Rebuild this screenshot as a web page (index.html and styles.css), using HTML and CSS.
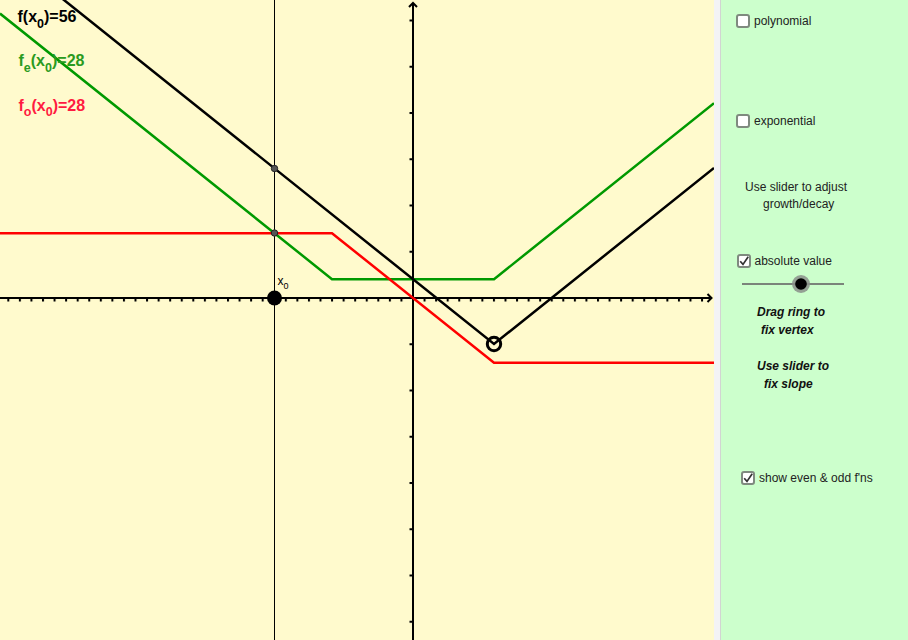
FILE: index.html
```html
<!DOCTYPE html>
<html>
<head>
<meta charset="utf-8">
<link rel="stylesheet" href="styles.css">
</head>
<body>
<div class="app">
  <div class="graphics">
    <svg width="714" height="640" viewBox="0 0 714 640">
      <defs>
        <pattern id="xt" patternUnits="userSpaceOnUse" x="412" y="0" width="11.5625" height="640">
          <rect x="0" y="298" width="2" height="3.5" fill="#000"/>
        </pattern>
        <pattern id="yt" patternUnits="userSpaceOnUse" x="0" y="297" width="714" height="46.25">
          <rect x="409.5" y="0" width="3" height="2" fill="#000"/>
        </pattern>
      </defs>
      <!-- axes -->
      <rect x="0" y="298" width="704" height="4" fill="url(#xt)"/>
      <rect x="405" y="10" width="8" height="630" fill="url(#yt)"/>
      <line x1="0" y1="298" x2="711" y2="298" stroke="#000" stroke-width="2"/>
      <polyline points="707.5,294 711.5,298 707.5,302" fill="none" stroke="#000" stroke-width="2"/>
      <line x1="413" y1="3" x2="413" y2="640" stroke="#000" stroke-width="2"/>
      <polyline points="409,7 413,3 417,7" fill="none" stroke="#000" stroke-width="2"/>
      <!-- vertical line through x0 -->
      <line x1="274.5" y1="0" x2="274.5" y2="640" stroke="#000" stroke-width="1"/>
      <!-- functions -->
      <polyline points="0,13.6 332,279.2 494,279.2 714,103.2" fill="none" stroke="#009900" stroke-width="2.5"/>
      <polyline points="0,233.2 332,233.2 494,362.8 714,362.8" fill="none" stroke="#ff0000" stroke-width="2.5"/>
      <polyline points="0,-51.2 494,344 714,168" fill="none" stroke="#000" stroke-width="2.5"/>
      <!-- points -->
      <circle cx="274.5" cy="168.5" r="3.2" fill="#555" stroke="#222" stroke-width="1"/>
      <circle cx="274.5" cy="233" r="3.2" fill="#555" stroke="#222" stroke-width="1"/>
      <circle cx="274.5" cy="298" r="7.5" fill="#000"/>
      <circle cx="494" cy="344" r="6.7" fill="none" stroke="#000" stroke-width="3"/>
      <!-- labels -->
      <text class="xlab" x="277.5" y="284.5">x<tspan class="xsub" dy="4">0</tspan></text>
      <text class="flab fblack" x="17.5" y="22">f(x<tspan class="sub" dy="6">0</tspan><tspan dy="-6">)=56</tspan></text>
      <text class="flab fgreen" x="18.5" y="66">f<tspan class="sub" dy="6">e</tspan><tspan dy="-6">(x</tspan><tspan class="sub" dy="6">0</tspan><tspan dy="-6">)=28</tspan></text>
      <text class="flab fred" x="18.5" y="111">f<tspan class="sub" dy="5">o</tspan><tspan dy="-5">(x</tspan><tspan class="sub" dy="5">0</tspan><tspan dy="-5">)=28</tspan></text>
    </svg>
  </div>
  <div class="divider"></div>
  <div class="panel">
    <div class="check-row row-poly"><span class="box"></span><span>polynomial</span></div>
    <div class="check-row row-exp"><span class="box"></span><span>exponential</span></div>
    <div class="info">
      <div class="l1">Use slider to adjust</div>
      <div class="l2">growth/decay</div>
    </div>
    <div class="check-row row-abs"><span class="box"><svg width="10" height="10" viewBox="0 0 10 10"><path d="M1.2 5.2 L4 8.4 L9.2 0.8" fill="none" stroke="#333" stroke-width="1.7"/></svg></span><span>absolute value</span></div>
    <div class="slider">
      <svg width="104" height="20" viewBox="0 0 104 20">
        <line x1="0" y1="10" x2="102" y2="10" stroke="#7a847a" stroke-width="2"/>
        <circle cx="59" cy="10" r="9" fill="#8a8f8a" opacity="0.85"/>
        <circle cx="59" cy="10" r="5.8" fill="#000"/>
      </svg>
    </div>
    <div class="note note-drag">
      <div class="l1">Drag ring to</div>
      <div class="l2">fix vertex</div>
    </div>
    <div class="note note-slope">
      <div class="l1">Use slider to</div>
      <div class="l2">fix slope</div>
    </div>
    <div class="check-row row-even"><span class="box"><svg width="10" height="10" viewBox="0 0 10 10"><path d="M1.2 5.2 L4 8.4 L9.2 0.8" fill="none" stroke="#333" stroke-width="1.7"/></svg></span><span>show even &amp; odd f'ns</span></div>
  </div>
</div>
</body>
</html>
```
FILE: styles.css
```css
html, body {
  margin: 0;
  padding: 0;
}
body {
  width: 908px;
  height: 640px;
  overflow: hidden;
  font-family: "Liberation Sans", Arial, sans-serif;
  background: #ccffcc;
}
.app {
  display: flex;
  height: 640px;
}
.graphics {
  width: 714px;
  height: 640px;
  flex: none;
  background: #fffacd;
}
.graphics svg {
  display: block;
}
.flab {
  font-family: "Liberation Sans", Arial, sans-serif;
  font-weight: bold;
  font-size: 16px;
}
.flab .sub {
  font-size: 12.5px;
}
.fblack { fill: #000; }
.fgreen { fill: #2a9a20; }
.fred { fill: #ff1a40; }
.xlab {
  font-family: "Liberation Sans", Arial, sans-serif;
  font-size: 12px;
  fill: #000;
}
.xlab .xsub {
  font-size: 9px;
}
.divider {
  width: 6px;
  flex: none;
  background: #f3f3f5;
  border-right: 1px solid #d2d4d2;
}
.panel {
  flex: 1;
  background: #ccffcc;
  padding-top: 14px;
  font-size: 12px;
  color: #222;
}
.check-row {
  display: flex;
  align-items: center;
  height: 14px;
  line-height: 14px;
}
.box {
  width: 14px;
  height: 14px;
  box-sizing: border-box;
  border: 2px solid #7f8a7f;
  border-radius: 3px;
  background: #fff;
  margin-right: 4px;
  display: flex;
  align-items: center;
  justify-content: center;
  flex: none;
}
.box svg {
  display: block;
}
.row-poly {
  margin-left: 15px;
}
.row-exp {
  margin-left: 15px;
  margin-top: 86px;
}
.info {
  margin-top: 50.5px;
  line-height: 17px;
}
.info .l1 { padding-left: 24px; }
.info .l2 { padding-left: 42px; }
.row-abs {
  margin-top: 41px;
  margin-left: 16px;
}
.row-abs .box {
  margin-right: 3.5px;
}
.slider {
  margin-top: 6px;
  margin-left: 21px;
  height: 20px;
}
.slider svg {
  display: block;
}
.note {
  font-weight: bold;
  font-style: italic;
  line-height: 18px;
  color: #111;
}
.note-drag {
  margin-top: 9px;
}
.note-drag .l1 { padding-left: 36px; }
.note-drag .l2 { padding-left: 40px; }
.note-slope {
  margin-top: 18px;
}
.note-slope .l1 { padding-left: 36px; }
.note-slope .l2 { padding-left: 43px; }
.row-even {
  margin-top: 78px;
  margin-left: 20px;
}
```
